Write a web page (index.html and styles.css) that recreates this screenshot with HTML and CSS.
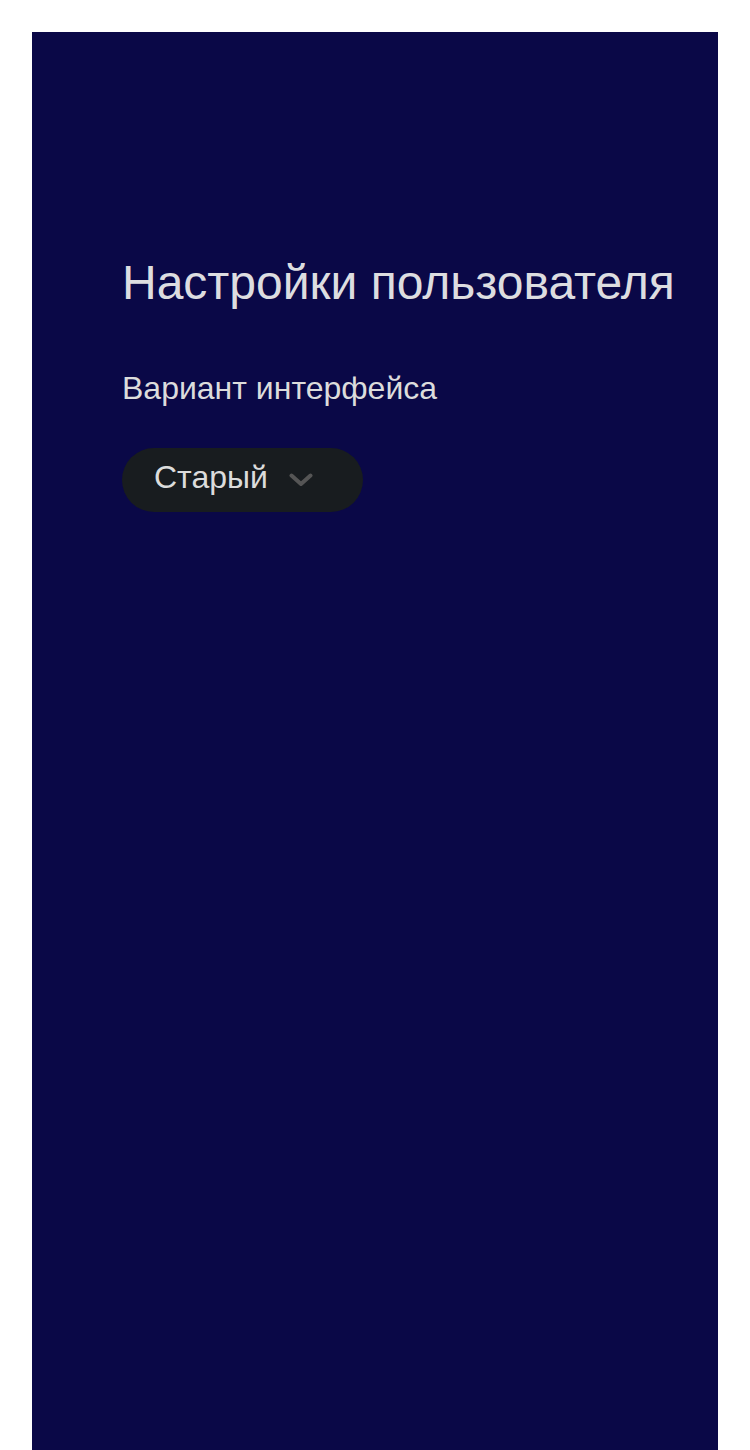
FILE: index.html
```
<!DOCTYPE html>
<html lang="ru">
<head>
<meta charset="utf-8">
<link rel="stylesheet" href="styles.css">
</head>
<body>
<main class="panel">
  <h1 class="title">Настройки пользователя</h1>
  <div class="label">Вариант интерфейса</div>
  <button class="select">
    <span class="select-text">Старый</span>
    <svg class="chevron" width="24" height="14" viewBox="0 0 24 14"><path d="M2.5 2.5 L12 11 L21.5 2.5" fill="none" stroke="#555555" stroke-width="4" stroke-linecap="round" stroke-linejoin="round"/></svg>
  </button>
</main>
</body>
</html>
```
FILE: styles.css
```
html, body { margin: 0; padding: 0; background: #ffffff; }
body { padding: 32px 32px 0 32px; font-family: "Liberation Sans", Arial, sans-serif; }
.panel {
  background: #0a0847;
  min-height: 1418px;
  padding: 221px 20px 0 90px;
  box-sizing: border-box;
  color: #dcdcdc;
}
.title {
  margin: 0;
  font-size: 48px;
  font-weight: normal;
  line-height: 60px;
  color: #dddde0;
  white-space: nowrap;
}
.label {
  margin-top: 55px;
  font-size: 32px;
  line-height: 40px;
}
.select {
  margin-top: 40px;
  display: flex;
  align-items: center;
  gap: 21px;
  width: 241px;
  height: 64px;
  padding: 0 0 5px 32px;
  border: none;
  border-radius: 32px;
  background: #181c1f;
  color: #dcdcdc;
  font-family: "Liberation Sans", Arial, sans-serif;
  font-size: 32px;
}
.chevron { display: block; margin-top: 5px; }
```
